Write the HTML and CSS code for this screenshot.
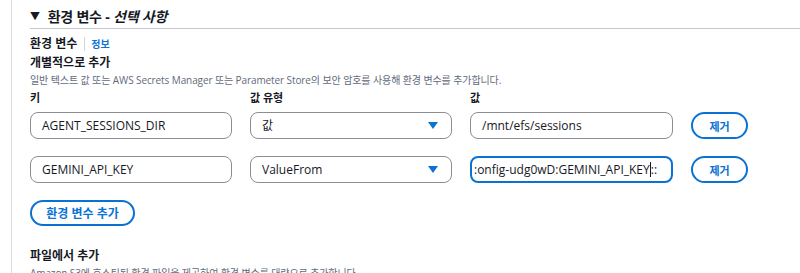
FILE: index.html
```html
<!DOCTYPE html>
<html lang="ko">
<head>
  <meta charset="UTF-8">
  <title>환경 변수</title>
  <link rel="stylesheet" href="styles.css">
</head>
<body>
  <div class="panel">
    <div class="header">
      <span class="caret-down">&#9660;</span>
      <span class="header-title">환경 변수 - <em>선택 사항</em></span>
    </div>

    <div class="label-row">
      <span class="label">환경 변수</span>
      <span class="divider"></span>
      <span class="info-link">정보</span>
    </div>
    <div class="sub-title">개별적으로 추가</div>
    <div class="desc">일반 텍스트 값 또는 AWS Secrets Manager 또는 Parameter Store의 보안 암호를 사용해 환경 변수를 추가합니다.</div>

    <div class="grid col-labels">
      <div class="col-label">키</div>
      <div class="col-label">값 유형</div>
      <div class="col-label">값</div>
      <div></div>
    </div>

    <div class="grid env-row">
      <div class="field">AGENT_SESSIONS_DIR</div>
      <div class="field select">
        <span>값</span>
        <span class="arrow"></span>
      </div>
      <div class="field">/mnt/efs/sessions</div>
      <button class="btn-remove">제거</button>
    </div>

    <div class="grid env-row">
      <div class="field">GEMINI_API_KEY</div>
      <div class="field select">
        <span>ValueFrom</span>
        <span class="arrow"></span>
      </div>
      <div class="field focused">:onfig-udg0wD:GEMINI_API_KEY<span class="text-caret"></span>::</div>
      <button class="btn-remove">제거</button>
    </div>

    <button class="btn-add">환경 변수 추가</button>

    <div class="sub-title file-title">파일에서 추가</div>
    <div class="desc">Amazon S3에 호스팅된 환경 파일을 제공하여 환경 변수를 대량으로 추가합니다.</div>
  </div>
</body>
</html>
```

FILE: styles.css
```css
body {
  margin: 0;
  padding-left: 11px;
  font-family: "Open Sans", "Noto Sans CJK KR", sans-serif;
  color: #16191f;
  background: #ffffff;
  overflow: hidden;
}

.panel {
  border-left: 1px solid #d5dbdb;
  padding-left: 18px;
  height: 273px;
}

.header {
  padding-top: 6px;
  height: 22px;
  line-height: 20px;
  font-size: 14px;
  font-weight: bold;
  border-bottom: 1px solid #c6c6cd;
}

.caret-down {
  font-size: 10px;
  display: inline-block;
  width: 14px;
  vertical-align: 2px;
}

.header-title {
  letter-spacing: -0.2px;
}

.header-title em {
  font-style: italic;
}

.label-row {
  margin-top: 6px;
  line-height: 18px;
  font-size: 12px;
  font-weight: bold;
  display: flex;
  align-items: center;
}

.divider {
  display: inline-block;
  width: 1px;
  height: 14px;
  background: #d1d5db;
  margin: 0 6px 0 7px;
}

.info-link {
  color: #0972d3;
  font-size: 10px;
}

.sub-title {
  margin-top: 1px;
  line-height: 18px;
  font-size: 12px;
  font-weight: bold;
}

.desc {
  line-height: 16px;
  font-size: 10px;
  letter-spacing: -0.1px;
  color: #5f6b7a;
  white-space: nowrap;
}

.grid {
  display: grid;
  grid-template-columns: 202px 202px 203px 57px;
  column-gap: 18px;
}

.col-labels {
  margin-top: 1px;
  line-height: 18px;
  font-size: 11px;
  font-weight: bold;
}

.env-row {
  margin-top: 5px;
  height: 27px;
}

.env-row + .env-row {
  margin-top: 17px;
}

.field {
  box-sizing: border-box;
  height: 27px;
  border: 1px solid #8c8c94;
  border-radius: 8px;
  padding: 0 11px;
  font-size: 12px;
  line-height: 25px;
  white-space: nowrap;
  overflow: hidden;
}

.select {
  display: flex;
  justify-content: space-between;
  align-items: center;
  padding-right: 13px;
}

.arrow {
  width: 0;
  height: 0;
  border-left: 5px solid transparent;
  border-right: 5px solid transparent;
  border-top: 7px solid #0972d3;
}

.focused {
  border: 2px solid #0972d3;
  line-height: 23px;
  padding-left: 2px;
}

.text-caret {
  display: inline-block;
  width: 1px;
  height: 15px;
  background: #16191f;
  vertical-align: -3px;
}

.btn-remove, .btn-add {
  box-sizing: border-box;
  height: 27px;
  border: 2px solid #0972d3;
  border-radius: 20px;
  background: #ffffff;
  color: #0972d3;
  font-family: inherit;
  font-size: 11px;
  font-weight: bold;
  padding: 0;
  cursor: pointer;
}

.btn-add {
  display: block;
  width: 105px;
  height: 26px;
  margin-top: 17px;
  font-size: 12px;
}

.file-title {
  margin-top: 21px;
}
```
